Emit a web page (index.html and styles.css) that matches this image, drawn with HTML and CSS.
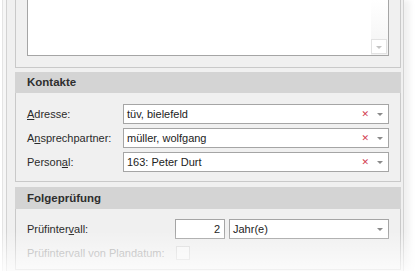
FILE: index.html
```html
<!DOCTYPE html>
<html>
<head>
<meta charset="utf-8">
<link rel="stylesheet" href="styles.css">
</head>
<body>
<div class="window">
  <div class="group top-group">
    <div class="memo">
      <div class="memo-scroll">
        <div class="scroll-btn"><span class="tri tri-light"></span></div>
      </div>
    </div>
  </div>

  <div class="section">
    <div class="section-head">Kontakte</div>
    <div class="section-body">
      <div class="row">
        <label class="lbl"><u>A</u>dresse:</label>
        <div class="combo">
          <span class="val">tüv, bielefeld</span>
          <span class="clear">✕</span>
          <span class="tri"></span>
        </div>
      </div>
      <div class="row">
        <label class="lbl">A<u>n</u>sprechpartner:</label>
        <div class="combo">
          <span class="val">müller, wolfgang</span>
          <span class="clear">✕</span>
          <span class="tri"></span>
        </div>
      </div>
      <div class="row">
        <label class="lbl">Person<u>a</u>l:</label>
        <div class="combo">
          <span class="val">163: Peter Durt</span>
          <span class="clear">✕</span>
          <span class="tri"></span>
        </div>
      </div>
    </div>
  </div>

  <div class="section last">
    <div class="section-head">Folgeprüfung</div>
    <div class="section-body">
      <div class="row">
        <label class="lbl wide">Prüfinter<u>v</u>all:</label>
        <div class="num">2</div>
        <div class="combo unit">
          <span class="val">Jahr(e)</span>
          <span class="tri"></span>
        </div>
      </div>
      <div class="row row-check">
        <label class="lbl wide disabled">Prüfintervall von Plandatum:</label>
        <div class="check"></div>
      </div>
    </div>
  </div>
  <div class="fade"></div>
</div>
</body>
</html>
```

FILE: styles.css
```css
html, body {
  margin: 0;
  padding: 0;
  background: #ffffff;
  width: 415px;
  height: 271px;
  overflow: hidden;
}

body {
  font-family: "Liberation Sans", Arial, sans-serif;
  font-size: 11px;
  color: #2b2b2b;
}

.window {
  position: relative;
  margin-left: 6px;
  width: 396px;
  height: 271px;
  background: #f0f0f0;
  border-left: 1px solid #d2d2d2;
  border-right: 1px solid #d2d2d2;
  box-shadow: -3px 0 0 0 #f6f6f6, -4px 0 0 0 #e4e4e4, 6px 0 6px rgba(0,0,0,0.06);
  padding-left: 8px;
  box-sizing: border-box;
  width: 398px;
}

.group {
  width: 386px;
  box-sizing: border-box;
  border: 1px solid #c9c9c9;
  border-top: none;
}

.top-group {
  height: 68px;
  padding: 0 11px 11px 11px;
}

.memo {
  height: 56px;
  box-sizing: border-box;
  background: #ffffff;
  border: 1px solid #a5a5a5;
  border-top: none;
  display: flex;
  justify-content: flex-end;
}

.memo-scroll {
  width: 17px;
  height: 100%;
  background: linear-gradient(to bottom, #ffffff 0%, #f3f3f3 100%);
  display: flex;
  flex-direction: column;
  justify-content: flex-end;
}

.scroll-btn {
  height: 15px;
  width: 16px;
  box-sizing: border-box;
  border: 1px solid #e2e2e2;
  background: #ffffff;
  display: flex;
  align-items: center;
  justify-content: center;
  margin-bottom: 1px;
}

.section {
  width: 386px;
  margin-top: 4px;
  box-sizing: border-box;
  border: 1px solid #c9c9c9;
  border-top: none;
}

.section + .section {
  margin-top: 5px;
}

.section-head {
  height: 21px;
  background: #d4d4d4;
  font-weight: bold;
  color: #2e2e2e;
  font-size: 11.5px;
  line-height: 21px;
  padding-left: 11px;
  margin: 0 -1px;
  padding-left: 12px;
}

.last .section-head {
  height: 22px;
  line-height: 22px;
}

.section-body {
  padding: 11px 11px 9px 11px;
  display: flex;
  flex-direction: column;
  gap: 4px;
}

.last .section-body {
  padding-top: 10px;
  gap: 7px;
}

.row {
  display: flex;
  align-items: center;
  height: 20px;
}

.row-check {
  height: 14px;
}

.lbl {
  width: 96px;
  flex: none;
  color: #2b2b2b;
}

.lbl u {
  text-decoration: underline;
  text-underline-offset: 1px;
}

.lbl.wide {
  width: 148px;
}

.lbl.disabled {
  color: #a8a8a8;
}

.combo {
  flex: none;
  width: 266px;
  height: 20px;
  box-sizing: border-box;
  border: 1px solid #a5a5a5;
  background: #ffffff;
  display: flex;
  align-items: center;
  padding-left: 3px;
  padding-right: 5px;
}

.combo.unit {
  width: 160px;
  margin-left: 4px;
}

.val {
  flex: 1;
  color: #222222;
  white-space: nowrap;
}

.clear {
  color: #d2404f;
  font-size: 9px;
  font-weight: bold;
  margin-right: 8px;
  font-family: "DejaVu Sans", sans-serif;
}

.tri {
  width: 0;
  height: 0;
  border-left: 3px solid transparent;
  border-right: 3px solid transparent;
  border-top: 3px solid #8a8a8a;
  margin-top: 1px;
}

.tri-light {
  border-top-color: #c4c4c4;
}

.num {
  flex: none;
  width: 50px;
  height: 20px;
  box-sizing: border-box;
  border: 1px solid #a5a5a5;
  background: #ffffff;
  text-align: right;
  padding-right: 4px;
  line-height: 18px;
  color: #222222;
}

.check {
  width: 14px;
  height: 14px;
  box-sizing: border-box;
  border: 1px solid #dadada;
  background: #f6f6f6;
  margin-left: 1px;
}

.fade {
  position: absolute;
  left: -8px;
  right: -10px;
  bottom: 0;
  height: 40px;
  background: linear-gradient(to bottom, rgba(255,255,255,0) 0%, rgba(255,255,255,0.75) 100%);
  pointer-events: none;
}
```
